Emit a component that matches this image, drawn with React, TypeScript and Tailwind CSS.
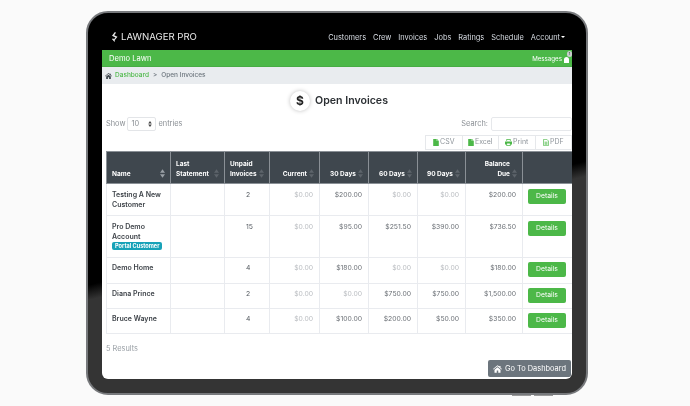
const cols = ["w-[64px]", "w-[54px]", "w-[45px]", "w-[50px]", "w-[49px]", "w-[49px]", "w-[48px]", "w-[57px]", "w-[50px]"];

function HomeIcon({ className }: { className: string }) {
  return (
    <svg viewBox="0 0 12 10" className={className}>
      <path d="M6 0 0 5l.6.7L6 1.3l5.4 4.4.6-.7-2-1.7V1H8.6v.7ZM2 6v4h3V7h2v3h3V6L6 2.7Z" fill="currentColor" />
    </svg>
  );
}

function FileIcon({ className }: { className: string }) {
  return (
    <svg viewBox="0 0 8 10" className={className}>
      <path d="M0 0h5v3h3v7H0ZM5.6 0 8 2.4H5.6Z" fill="currentColor" />
    </svg>
  );
}

function PrintIcon({ className }: { className: string }) {
  return (
    <svg viewBox="0 0 10 10" className={className}>
      <path d="M2 0h6v3H7V1H3v2H2ZM0 3.5h10V8H8v2H2V8H0ZM3 6.5V9h4V6.5Z" fill="currentColor" fillRule="evenodd" />
    </svg>
  );
}

function PdfIcon({ className }: { className: string }) {
  return (
    <svg viewBox="0 0 8 10" className={className}>
      <path d="M.5.5h4.7L7.5 2.8v6.7h-7ZM2 4.5h4M2 6h4M2 7.5h4" fill="none" stroke="currentColor" />
    </svg>
  );
}

function Sort({ on }: { on?: boolean }) {
  return (
    <span className={`flex flex-col leading-none ${on ? "text-[#9aa0a6]" : "text-[#5d646b]"}`}>
      <svg viewBox="0 0 6 10" className="w-[5px] h-[9px] fill-current">
        <path d="M3 0 6 4H0ZM3 10 0 6h6Z" />
      </svg>
    </span>
  );
}

const heads: [string, string?][] = [
  ["Name"],
  ["Last", "Statement"],
  ["Unpaid", "Invoices"],
  ["Current"],
  ["30 Days"],
  ["60 Days"],
  ["90 Days"],
  ["Balance", "Due"],
];

type Row = { n: string[]; badge?: boolean; u: string; v: string[]; h: string; btn: string; pt: string };
const rows: Row[] = [
  { n: ["Testing A New", "Customer"], u: "2", v: ["$0.00", "$200.00", "$0.00", "$0.00", "$200.00"], h: "h-[32px]", btn: "mt-[0px]", pt: "pt-[6px]" },
  { n: ["Pro Demo", "Account"], badge: true, u: "15", v: ["$0.00", "$95.00", "$251.50", "$390.00", "$736.50"], h: "h-[42px]", btn: "mt-[0px]", pt: "pt-[6px]" },
  { n: ["Demo Home"], u: "4", v: ["$0.00", "$180.00", "$0.00", "$0.00", "$180.00"], h: "h-[26px]", btn: "-mt-[1px]", pt: "pt-[5px]" },
  { n: ["Diana Prince"], u: "2", v: ["$0.00", "$0.00", "$750.00", "$750.00", "$1,500.00"], h: "h-[25px]", btn: "-mt-[1px]", pt: "pt-[5px]" },
  { n: ["Bruce Wayne"], u: "4", v: ["$0.00", "$100.00", "$200.00", "$50.00", "$350.00"], h: "h-[25px]", btn: "-mt-[1px]", pt: "pt-[5px]" },
];

const nav = ["Customers", "Crew", "Invoices", "Jobs", "Ratings", "Schedule"];

function Tool({ icon, label }: { icon: React.ReactNode; label: string }) {
  return (
    <div className="w-[37.5px] h-[15px] flex items-center justify-center gap-[1px] border border-[#e6e8eb] -ml-px text-[#8f959b] text-[7px]">
      <span className="text-[#4cb848]">{icon}</span>
      {label}
    </div>
  );
}

export default function App() {
  return (
    <div className="w-[690px] h-[406px] bg-[#fafafa] overflow-hidden pt-[11px] pl-[86px] font-['Inter','Liberation_Sans',sans-serif] blur-[0.4px]">
      <div className="relative w-[502px] h-[384px] rounded-[22px] border-2 border-[#77797c] bg-[linear-gradient(166deg,#000_0%,#000_54%,#343434_57%,#343434_100%)] pt-[15px] pl-[14px]">
        <div className="w-[470px] h-[351px] rounded-b-[6px] overflow-hidden bg-white flex flex-col">
          <div className="h-[22px] bg-black flex items-center pl-[9px] pr-[7px] pb-[3px] text-white shrink-0">
            <svg viewBox="0 0 8 12" className="w-[7px] h-[10px] mb-[2px] fill-[#e8e8e8]">
              <path d="M4.5 0 1 4.6l4.2 1.9L3 9 4.4 9.6 7.6 5.8 3.6 3.9 5.8.8ZM2.2 7.4 1 8.8l3 3 .8-1Z" />
            </svg>
            <span className="ml-[3px] text-[9.6px] text-[#e8e8e8]">LAWNAGER PRO</span>
            <div className="ml-auto flex gap-[7px] text-[7.4px] text-[#d8dde4]">
              {nav.map((n) => (
                <span key={n}>{n}</span>
              ))}
              <span className="flex items-center gap-[1px]">
                Account
                <span className="w-0 h-0 border-x-[2px] border-x-transparent border-t-[2px] border-t-white" />
              </span>
            </div>
          </div>
          <div className="h-[17px] bg-[#4cb848] flex items-center pl-[7px] text-white shrink-0 border-b border-[#47ac44]">
            <span className="text-[7.6px] mt-[1px]">Demo Lawn</span>
            <div className="ml-auto flex items-center gap-[1px] text-[6.2px] mt-[1px]">
              Messages
              <span className="relative w-[9px] h-[12px] mb-[1px]">
                <span className="absolute left-[1px] bottom-[1px] w-[5px] h-[6px] rounded-t-full rounded-b-[1px] bg-white" />
                <span className="absolute right-0 top-[-1px] w-[5px] h-[6px] bg-[#c9ccce] rounded-full text-[4px] leading-[6px] text-[#333] text-center">1</span>
              </span>
            </div>
          </div>
          <div className="h-[17px] bg-[#e9ecef] flex items-center pl-[3px] pt-[1px] text-[6.5px] shrink-0 font-medium">
            <HomeIcon className="w-[7px] h-[6px] text-[#3f474e]" />
            <span className="ml-[3px] text-[#4cb848]">Dashboard</span>
            <span className="ml-[4px] text-[#6c757d]">&gt;</span>
            <span className="ml-[4px] text-[#6c757d]">Open Invoices</span>
          </div>

          <div className="relative flex-1 pl-[4px]">
            <div className="h-[33px] flex items-center justify-center gap-[5px]">
              <span className="w-[20px] h-[20px] rounded-full bg-white shadow-[0_0_4px_rgba(0,0,0,0.25)] flex items-center justify-center text-[12px] font-bold text-[#222]">$</span>
              <span className="text-[10.6px] font-semibold text-[#2b2f33]">Open Invoices</span>
            </div>
            <div className="h-[14px] flex items-center text-[7.4px] text-[#8a8f94]">
              <span>Show</span>
              <span className="ml-[2px] w-[29px] h-[14px] border border-[#e3e5e8] rounded-[2px] flex items-center justify-between px-[3px]">
                10
                <svg viewBox="0 0 6 10" className="w-[4px] h-[6px] fill-[#444]">
                  <path d="M3 0 6 4H0ZM3 10 0 6h6Z" />
                </svg>
              </span>
              <span className="ml-[2px]">entries</span>
              <span className="ml-auto mr-[3px]">Search:</span>
              <span className="w-[81px] h-[14px] border border-[#e6e8eb] rounded-[2px]" />
            </div>
            <div className="mt-[4px] h-[16px] flex justify-end items-start">
              <Tool icon={<FileIcon className="w-[6px] h-[7px]" />} label="CSV" />
              <Tool icon={<FileIcon className="w-[6px] h-[7px]" />} label="Excel" />
              <Tool icon={<PrintIcon className="w-[7px] h-[7px]" />} label="Print" />
              <Tool icon={<PdfIcon className="w-[6px] h-[7px]" />} label="PDF" />
            </div>

            <table className="mt-0 border-collapse table-fixed w-[466px] text-[7px]">
              <colgroup>
                {cols.map((c, i) => (
                  <col key={i} className={c} />
                ))}
              </colgroup>
              <thead>
                <tr className="h-[32px] bg-[#3f474e] text-white text-[6.5px]">
                  {heads.map(([a, b], i) => (
                    <th key={a} className="border border-[#8a9096] px-[5px] pb-[4px] align-bottom font-bold text-right leading-[9.5px]">
                      <div className={`flex items-end ${i <= 2 ? "justify-between" : "justify-end"} gap-[2px]`}>
                        <span className={i <= 2 ? "text-left" : ""}>
                          {a}
                          {b && <br />}
                          {b}
                        </span>
                        <span className="mb-[1px] shrink-0">
                          <Sort on={i === 0} />
                        </span>
                      </div>
                    </th>
                  ))}
                  <th className="border border-[#8a9096]" />
                </tr>
              </thead>
              <tbody>
                {rows.map((r) => (
                  <tr key={r.n[0]} className={r.h}>
                    <td className={`border border-[#e9ebef] pl-[5px] align-top font-semibold text-[#3e4349] leading-[10px] ${r.pt}`}>
                      {r.n.map((x) => (
                        <div key={x} className="leading-[9.7px]">{x}</div>
                      ))}
                      {r.badge && (
                        <span className="inline-block mt-[1px] bg-[#17a2b8] text-white text-[5.6px] font-bold rounded-[2px] leading-[8px] px-[3px]">Portal Customer</span>
                      )}
                    </td>
                    <td className="border border-[#e9ebef]" />
                    <td className={`border border-[#e9ebef] pl-[21px] align-top text-[#555b61] text-[6.8px] leading-[10px] ${r.pt}`}>{r.u}</td>
                    {r.v.map((x, i) => (
                      <td key={i} className={`border border-[#e9ebef] pr-[6px] align-top text-right text-[6.8px] leading-[10px] ${r.pt} ${x === "$0.00" ? "text-[#b9bcc0]" : "text-[#6b7076]"}`}>
                        {x}
                      </td>
                    ))}
                    <td className="border border-[#e9ebef] px-[5px] pt-[5px] align-top">
                      <div className={`w-[38px] h-[15px] rounded-[2px] bg-[#4cb848] text-white text-[6.8px] flex items-center justify-center pb-[1px] ${r.btn}`}>Details</div>
                    </td>
                  </tr>
                ))}
              </tbody>
            </table>
            <div className="mt-[9px] text-[7.4px] text-[#9aa0a6]">5 Results</div>

            <div className="absolute right-[1px] bottom-[2px] w-[83px] h-[17px] rounded-[2px] bg-[#6c757d] text-white text-[7.4px] flex items-center justify-center gap-[3px]">
              <HomeIcon className="w-[9px] h-[8px]" />
              Go To Dashboard
            </div>
          </div>
        </div>
        <span className="absolute left-[424px] bottom-[-3px] w-[19px] h-[1px] bg-[#9a9a9a]" />
        <span className="absolute left-[446px] bottom-[-3px] w-[19px] h-[1px] bg-[#9a9a9a]" />
      </div>
    </div>
  );
}
